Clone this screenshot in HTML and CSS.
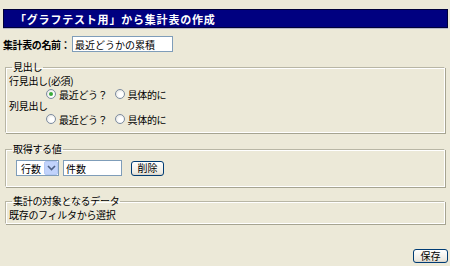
FILE: index.html
```html
<!DOCTYPE html>
<html lang="ja">
<head>
    <meta charset="UTF-8">
    <title>集計表の作成</title>
    <link rel="stylesheet" href="styles.css">
</head>
<body>
<div class="warper">
    <div class="title">「グラフテスト用」から集計表の作成</div>

    <div class="name-row">
        <span class="name-label">集計表の名前：</span>
        <input type="text" class="name-text" value="最近どうかの累積">
    </div>

    <fieldset class="group heads">
        <legend>見出し</legend>
        <div class="sub">行見出し(必須)</div>
        <div class="radios">
            <label><span class="radio checked"></span>最近どう？</label>
            <label><span class="radio"></span>具体的に</label>
        </div>
        <div class="sub second">列見出し</div>
        <div class="radios">
            <label><span class="radio"></span>最近どう？</label>
            <label><span class="radio"></span>具体的に</label>
        </div>
    </fieldset>

    <fieldset class="group values">
        <legend>取得する値</legend>
        <div class="value-row">
            <span class="select">
                <span class="select-text">行数</span>
                <span class="select-btn">
                    <svg width="9" height="6" viewBox="0 0 9 6"><path d="M1 1 L4.5 4.5 L8 1" fill="none" stroke="#4d6185" stroke-width="1.6"/></svg>
                </span>
            </span>
            <input type="text" class="value-text" value="件数">
            <button class="btn">削除</button>
        </div>
    </fieldset>

    <fieldset class="group target">
        <legend>集計の対象となるデータ</legend>
        <div class="sub">既存のフィルタから選択</div>
    </fieldset>

    <div class="foot">
        <button class="btn">保存</button>
    </div>
</div>
</body>
</html>
```

FILE: styles.css
```css
body {
    margin: 0;
    background: #ECE9D8;
    font-family: "Noto Sans CJK JP", "Noto Sans", sans-serif;
    font-size: 10px;
    color: #000000;
}

.warper {
    width: 450px;
    height: 266px;
    padding-top: 9px;
    box-sizing: border-box;
}

.title {
    margin: 0 2px 0 3px;
    height: 19px;
    line-height: 18px;
    box-sizing: border-box;
    background: #000080;
    border: 1px solid #00003a;
    box-shadow: 0 1px 0 #b9b8c8;
    color: #ffffff;
    font-weight: bold;
    font-size: 11px;
    letter-spacing: 0.8px;
    padding-left: 11px;
}

.name-row {
    display: flex;
    align-items: center;
    margin: 8px 0 0 3px;
    height: 16px;
}

.name-label {
    font-weight: bold;
    letter-spacing: -0.4px;
    width: 69px;
}

input[type='text'] {
    font-family: inherit;
    font-size: 10px;
    height: 16px;
    box-sizing: border-box;
    border: 1px solid #7f9db9;
    background: #ffffff;
    padding: 0 2px;
    margin: 0;
    outline: none;
}

.name-text {
    width: 101px;
}

.group {
    margin: 0 5px;
    border: 1px solid;
    border-color: #b8b6a5 #ffffff #ffffff #b8b6a5;
    box-shadow: 1px 1px 0 #a6a491, inset 1px 1px 0 #ffffff;
    padding: 0 3px;
    box-sizing: border-box;
}

.group legend {
    padding: 0 1px;
    margin-left: 3px;
    line-height: 11px;
    height: 12px;
    letter-spacing: -0.3px;
}

.heads {
    margin-top: 9px;
    height: 72px;
}

.sub {
    line-height: 12px;
    letter-spacing: -0.3px;
    margin-top: 2px;
}

.sub.second {
    margin-top: 0;
}

.radios {
    display: flex;
    gap: 7px;
    padding-left: 37px;
    height: 12px;
    align-items: center;
    margin-top: 1px;
}

.radios label {
    display: flex;
    align-items: center;
    gap: 3px;
    letter-spacing: -0.3px;
}

.radio {
    width: 10px;
    height: 10px;
    box-sizing: border-box;
    border-radius: 50%;
    border: 1px solid #7c8ba0;
    background: radial-gradient(circle at 60% 60%, #ffffff 30%, #dcdcd6 100%);
    position: relative;
}

.radio.checked::after {
    content: '';
    position: absolute;
    left: 2px;
    top: 2px;
    width: 4px;
    height: 4px;
    border-radius: 50%;
    background: #3bab3b;
}

.values {
    margin-top: 10px;
    height: 44px;
}

.value-row {
    display: flex;
    align-items: center;
    padding-left: 7px;
    margin-top: 5px;
}

.select {
    display: flex;
    align-items: center;
    width: 43px;
    height: 16px;
    box-sizing: border-box;
    border: 1px solid #7f9db9;
    background: #ffffff;
}

.select-text {
    flex: 1;
    padding-left: 4px;
}

.select-btn {
    width: 14px;
    height: 14px;
    box-sizing: border-box;
    background: #c1d3fb;
    border: 1px solid #b5c9f5;
    border-radius: 2px;
    display: flex;
    align-items: center;
    justify-content: center;
}

.value-text {
    width: 59px;
    margin-left: 4px !important;
}

.btn {
    font-family: inherit;
    font-size: 10px;
    height: 15px;
    padding: 0;
    border: 1px solid #003c74;
    border-radius: 3px;
    background: linear-gradient(#ffffff, #ece9e0 85%, #d6d0c5);
    line-height: 12px;
}

.value-row .btn {
    width: 33px;
    margin-left: 9px;
}

.target {
    margin-top: 8px;
    height: 29px;
}

.foot {
    display: flex;
    justify-content: flex-end;
    margin: 25px 2px 0 0;
}

.foot .btn {
    width: 35px;
    height: 14px;
}
```
